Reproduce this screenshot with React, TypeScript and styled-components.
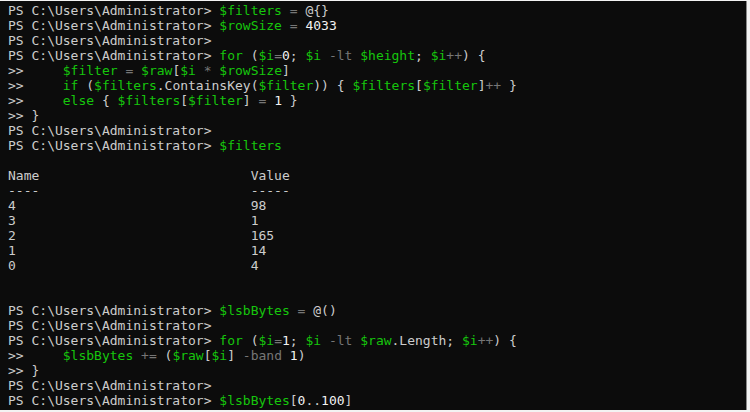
import React from "react";
import styled, { createGlobalStyle } from "styled-components";

const GlobalStyle = createGlobalStyle`
  html, body {
    margin: 0;
    padding: 0;
    background: #f3f3f3;
  }
  #root {
    width: 750px;
    height: 412px;
  }
`;

const Frame = styled.div`
  width: 750px;
  height: 412px;
  box-sizing: border-box;
  padding: 1px 2px 1px 0;
  background: #f3f3f3;
`;

const Terminal = styled.div`
  box-sizing: border-box;
  width: 747px;
  height: 409px;
  background: #0c0c0c;
  border-right: 1px solid #8a8a8a;
  padding: 2px 0 0 8px;
  overflow: hidden;
  font-family: "DejaVu Sans Mono", "Liberation Mono", monospace;
  font-size: 13px;
  line-height: 15px;
  color: #cccccc;
`;

const Line = styled.div`
  white-space: pre;
  height: 15px;
`;

type Kind = "t" | "v" | "k" | "o" | "n";

const Tok = styled.span<{ $kind: Kind }>`
  color: ${(p) =>
    p.$kind === "v"
      ? "#16c60c"
      : p.$kind === "k"
      ? "#16c60c"
      : p.$kind === "o"
      ? "#767676"
      : p.$kind === "n"
      ? "#f2f2f2"
      : "#cccccc"};
`;

type Seg = [Kind, string];

const P = "PS C:\\Users\\Administrator> ";
const C = ">>     ";

const lines: Seg[][] = [
  [["t", P], ["v", "$filters"], ["o", " = "], ["t", "@{}"]],
  [["t", P], ["v", "$rowSize"], ["o", " = "], ["n", "4033"]],
  [["t", P]],
  [
    ["t", P],
    ["k", "for"],
    ["t", " ("],
    ["v", "$i"],
    ["o", "="],
    ["n", "0"],
    ["t", "; "],
    ["v", "$i"],
    ["o", " -lt "],
    ["v", "$height"],
    ["t", "; "],
    ["v", "$i"],
    ["o", "++"],
    ["t", ") {"],
  ],
  [
    ["t", C],
    ["v", "$filter"],
    ["o", " = "],
    ["v", "$raw"],
    ["t", "["],
    ["v", "$i"],
    ["o", " * "],
    ["v", "$rowSize"],
    ["t", "]"],
  ],
  [
    ["t", C],
    ["k", "if"],
    ["t", " ("],
    ["v", "$filters"],
    ["t", ".ContainsKey("],
    ["v", "$filter"],
    ["t", ")) { "],
    ["v", "$filters"],
    ["t", "["],
    ["v", "$filter"],
    ["t", "]"],
    ["o", "++"],
    ["t", " }"],
  ],
  [
    ["t", C],
    ["k", "else"],
    ["t", " { "],
    ["v", "$filters"],
    ["t", "["],
    ["v", "$filter"],
    ["t", "]"],
    ["o", " = "],
    ["n", "1"],
    ["t", " }"],
  ],
  [["t", ">> }"]],
  [["t", P]],
  [["t", P], ["v", "$filters"]],
  [],
  [["t", "Name                           Value"]],
  [["t", "----                           -----"]],
  [["t", "4                              98"]],
  [["t", "3                              1"]],
  [["t", "2                              165"]],
  [["t", "1                              14"]],
  [["t", "0                              4"]],
  [],
  [],
  [["t", P], ["v", "$lsbBytes"], ["o", " = "], ["t", "@()"]],
  [["t", P]],
  [
    ["t", P],
    ["k", "for"],
    ["t", " ("],
    ["v", "$i"],
    ["o", "="],
    ["n", "1"],
    ["t", "; "],
    ["v", "$i"],
    ["o", " -lt "],
    ["v", "$raw"],
    ["t", ".Length; "],
    ["v", "$i"],
    ["o", "++"],
    ["t", ") {"],
  ],
  [
    ["t", C],
    ["v", "$lsbBytes"],
    ["o", " += "],
    ["t", "("],
    ["v", "$raw"],
    ["t", "["],
    ["v", "$i"],
    ["t", "]"],
    ["o", " -band "],
    ["n", "1"],
    ["t", ")"],
  ],
  [["t", ">> }"]],
  [["t", P]],
  [["t", P], ["v", "$lsbBytes"], ["t", "["], ["n", "0"], ["t", ".."], ["n", "100"], ["t", "]"]],
];

export default function App() {
  return (
    <>
      <GlobalStyle />
      <Frame>
        <Terminal>
          {lines.map((segs, i) => (
            <Line key={i}>
              {segs.map(([k, s], j) => (
                <Tok key={j} $kind={k}>
                  {s}
                </Tok>
              ))}
            </Line>
          ))}
        </Terminal>
      </Frame>
    </>
  );
}
